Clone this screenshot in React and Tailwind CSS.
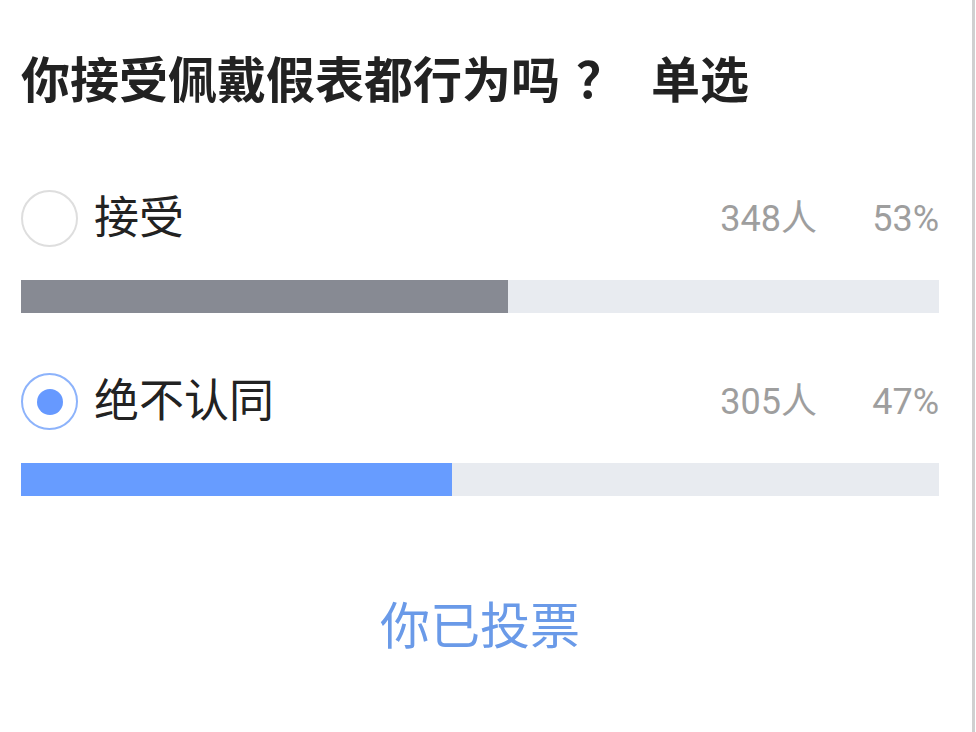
const options = [
  { label: "接受", count: 348, percent: 53, checked: false },
  { label: "绝不认同", count: 305, percent: 47, checked: true },
];

function Radio({ checked }) {
  if (checked) {
    return (
      <span className="flex size-[57px] shrink-0 items-center justify-center rounded-full border-[2px] border-[#8db3fb]">
        <span className="size-[26px] rounded-full bg-[#6699ff]" />
      </span>
    );
  }
  return <span className="size-[57px] shrink-0 rounded-full border-[2px] border-[#dedede]" />;
}

function Option({ label, count, percent, checked }) {
  return (
    <div className="flex flex-col">
      <div className="flex h-[57px] items-center">
        <Radio checked={checked} />
        <span className="ml-[16px] flex-1 text-[45px] leading-none text-[#222]">{label}</span>
        <span className="ml-[4px] text-[36px] leading-none text-[#9e9e9e]">{count}人</span>
        <span className="w-[122px] text-right text-[36px] leading-none text-[#9e9e9e]">{percent}%</span>
      </div>
      <div className="mt-[33px] h-[33px] w-full bg-[#e8ebf0]">
        <div
          className={checked ? "h-full bg-[#679cff]" : "h-full bg-[#878a93]"}
          style={{ width: `${percent}%` }}
        />
      </div>
    </div>
  );
}

export default function App() {
  return (
    <div
      className="h-[732px] w-[976px] bg-white"
      style={{ fontFamily: '"Roboto", "Noto Sans CJK SC", sans-serif' }}
    >
      <div className="flex h-full w-[975px] flex-col border-r-[3px] border-[#d0d0d0] pl-[21px] pr-[33px] pt-[48px]">
        <h1 className="h-[68px] text-[49px] font-bold leading-[68px] text-[#222]">
          你接受佩戴假表都行为吗<span className="ml-[16px]">？</span>
          <span className="ml-[26px]">单选</span>
        </h1>

        <div className="mt-[74px] flex flex-col gap-[60px]">
          {options.map((o) => (
            <Option key={o.label} {...o} />
          ))}
        </div>

        <div className="mt-[101px] flex h-[60px] items-center justify-center text-[50px] leading-none text-[#6a9ae8]">
          你已投票
        </div>
      </div>
    </div>
  );
}
